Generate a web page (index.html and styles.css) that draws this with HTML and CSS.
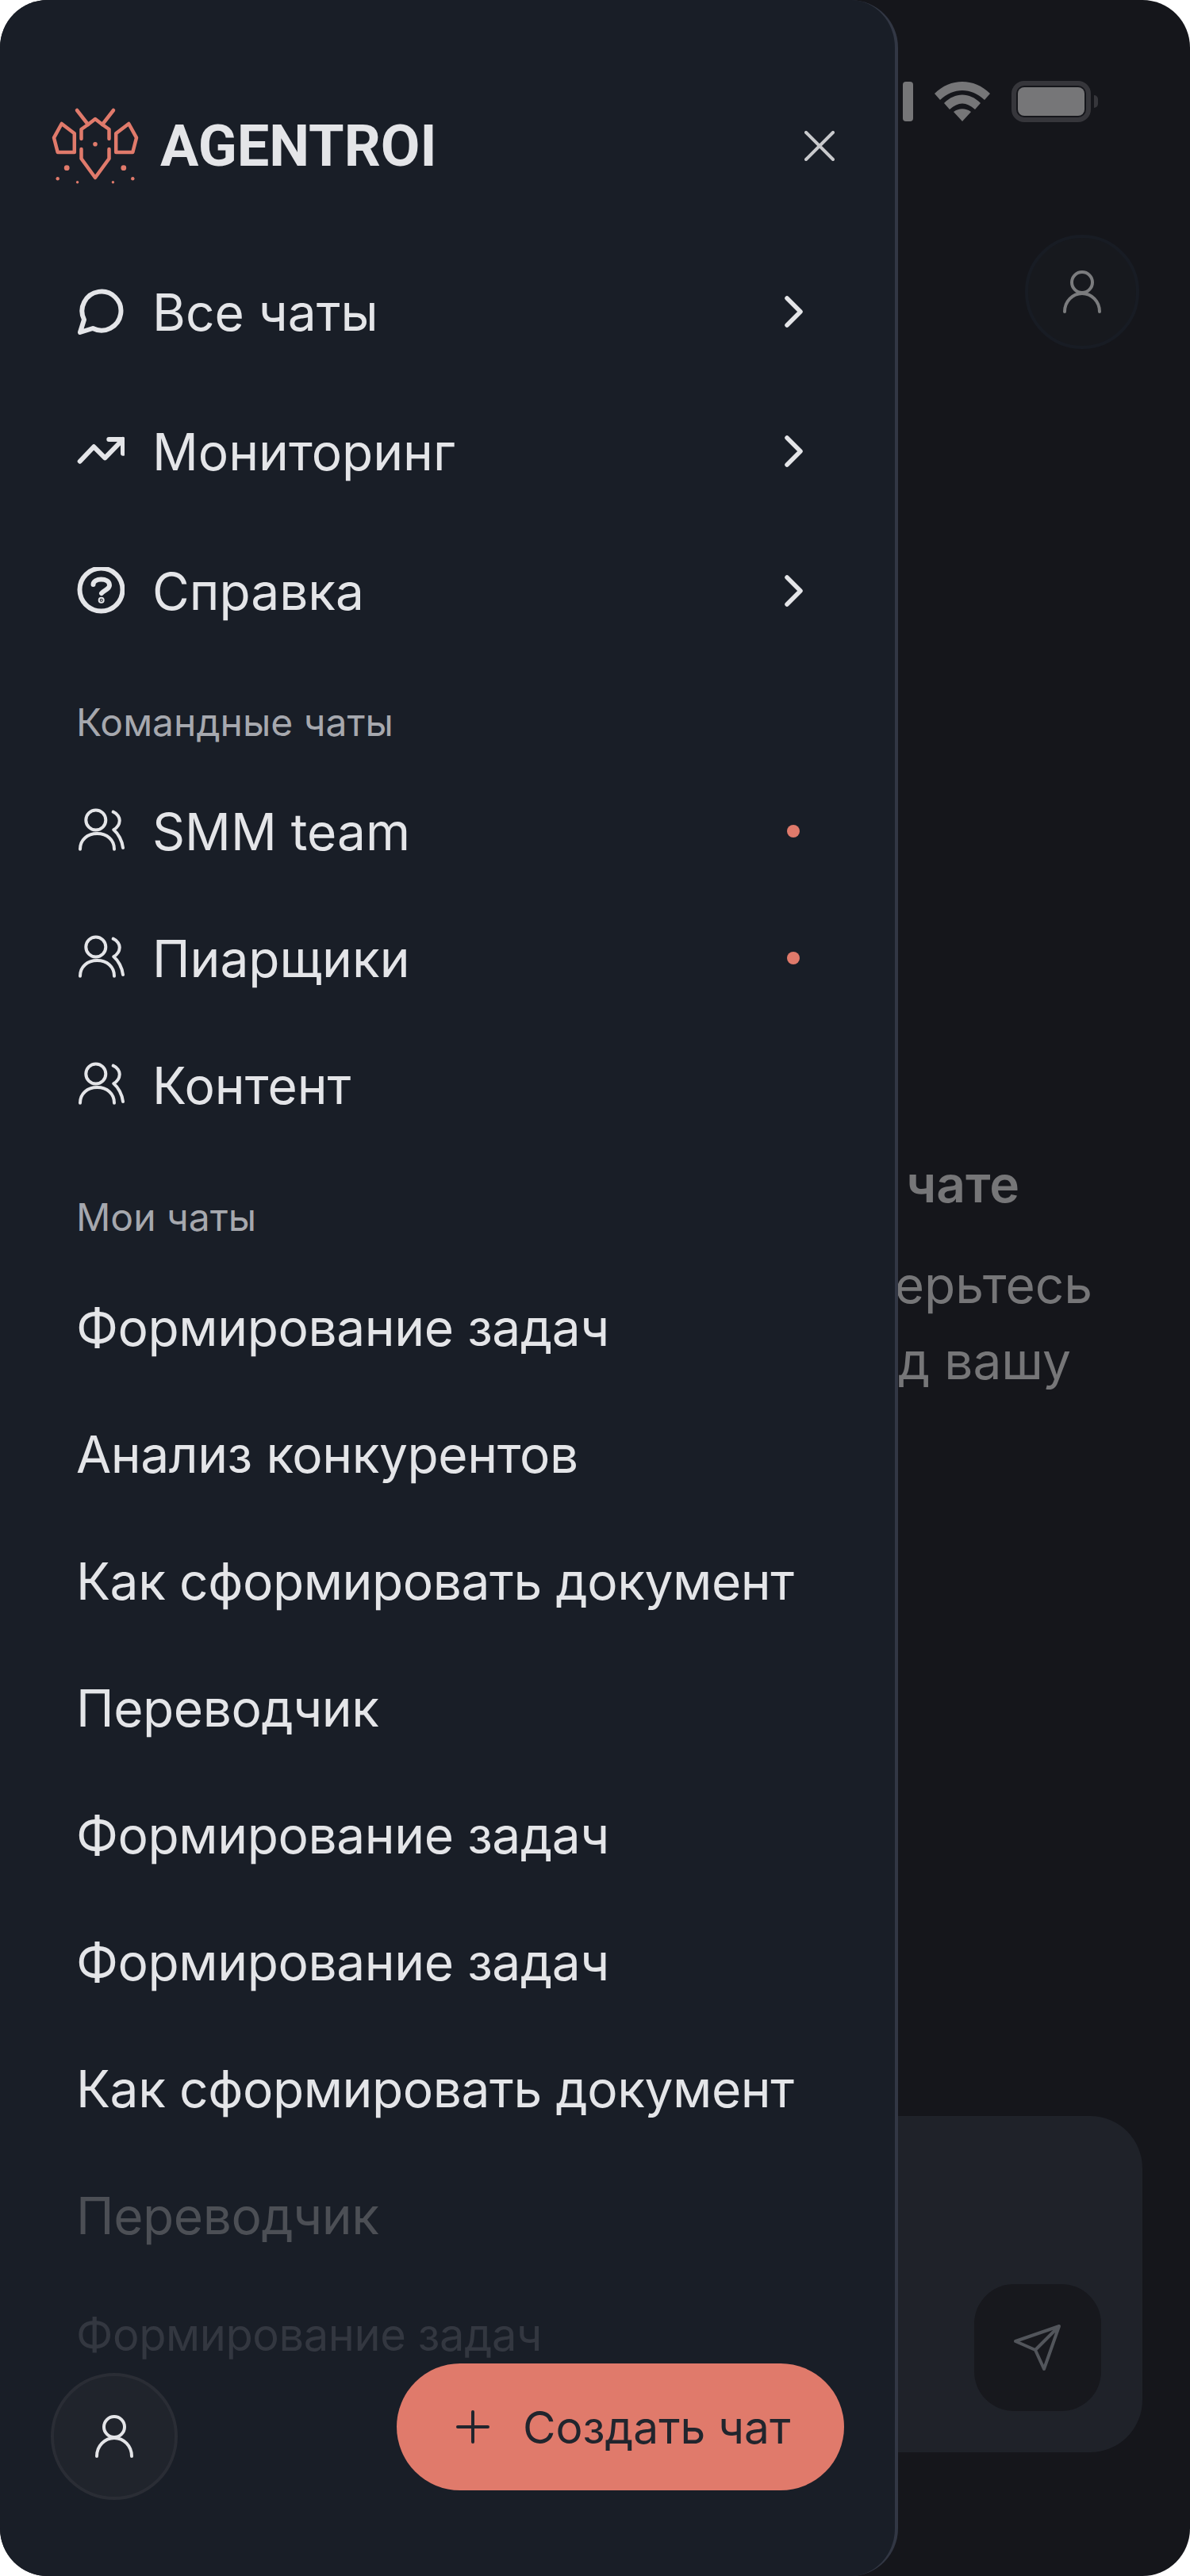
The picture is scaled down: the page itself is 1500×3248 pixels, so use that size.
FILE: index.html
```html
<!DOCTYPE html>
<html lang="ru">
<head>
  <meta charset="UTF-8">
  <title>Agentroi</title>
  <link rel="stylesheet" href="styles.css">
</head>
<body>
<div class="phone">

  <!-- chat screen behind the drawer -->
  <div class="screen">
    <div class="status">
      <span class="signal"></span>
      <svg class="wifi" viewBox="0 0 70 50"><path d="M0 15C20-5 50-5 70 15l-7 8C46 7 24 7 7 23zM12 27C26 13 44 13 58 27l-7 8C40 25 30 25 19 35zM24 38c7-5 15-5 22 0L35 50z" fill="#767678"/></svg>
      <span class="battery"><i></i></span>
      <span class="nub"></span>
    </div>
    <div class="screen-top">
      <span class="round-btn dim">
        <svg viewBox="0 0 48 54" class="user"><circle cx="24" cy="15" r="13"/><path d="M2 52c0-13 10-23 22-23s22 10 22 23"/></svg>
      </span>
    </div>
    <div class="empty">
      <h3>в чате</h3>
      <p class="line-a">доверьтесь</p>
      <p class="line-b">под вашу</p>
    </div>
    <div class="composer">
      <span class="send">
        <svg viewBox="0 0 64 64"><path d="M59 5 4 24 29 35 40 59zM59 5 29 35"/></svg>
      </span>
    </div>
  </div>

  <!-- drawer -->
  <aside class="drawer">
    <header class="brand">
      <svg class="logo" viewBox="0 0 106 95">
        <g class="logo-line">
          <path d="M30 2 44 20 53 13 62 20 76 2"/>
          <path d="M35.500 38V26L44 20M70.500 38V26L62 20"/>
          <path d="M35.500 51V63L53 87 70.500 63V51"/>
          <path d="M10.700 19 1 36.700 5.700 55H26.800V31.300z"/>
          <path d="M95.300 19 105 36.700 100.300 55H79.200V31.300z"/>
        </g>
        <g class="logo-dots">
          <circle cx="53" cy="44.700" r="2.800"/>
          <circle cx="17.200" cy="74.700" r="3.400"/><circle cx="88.800" cy="74.700" r="3.400"/>
          <circle cx="5.700" cy="88.300" r="2.200"/><circle cx="30.600" cy="92.700" r="1.700"/>
          <circle cx="75.400" cy="92.700" r="1.700"/><circle cx="100.300" cy="88.300" r="2.200"/>
        </g>
      </svg>
      <span class="brand-name">AGENTROI</span>
      <svg class="close" viewBox="0 0 38 38"><path d="M2 2l34 34M36 2 2 36"/></svg>
    </header>

    <nav class="main-nav">
      <a class="nav-row">
        <svg class="ico" viewBox="0 0 60 60"><path d="M9 40A24.500 24.500 0 1 1 20 51L4 56z"/></svg>
        <span>Все чаты</span>
        <svg class="chev" viewBox="0 0 24 40"><path d="M3 3l17 17L3 37"/></svg>
      </a>
      <a class="nav-row">
        <svg class="ico" viewBox="0 0 60 60"><path d="M3.700 42.700 21.300 24.300 35.300 38.300 58 15M40.300 15H58V32.700"/></svg>
        <span>Мониторинг</span>
        <svg class="chev" viewBox="0 0 24 40"><path d="M3 3l17 17L3 37"/></svg>
      </a>
      <a class="nav-row">
        <svg class="ico" viewBox="0 0 60 60"><circle cx="30.500" cy="28.500" r="27"/><path d="M20.500 22C20.500 18 25 15.500 30.500 15.500 36 15.500 41 18 41 23 41 28 34 29 31 33"/><circle class="fill" cx="30.700" cy="41.700" r="1"/></svg>
        <span>Справка</span>
        <svg class="chev" viewBox="0 0 24 40"><path d="M3 3l17 17L3 37"/></svg>
      </a>
    </nav>

    <h4 class="section-title first">Командные чаты</h4>
    <a class="team-row">
      <svg class="ico thin" viewBox="0 0 60 60"><circle cx="23.800" cy="16" r="12.500"/><path d="M4 52.700C4 41 13 33 25.500 33S47 41 47 52.700M45.700 5.700C51 8 54 13 53.700 17 53.500 22 50 26 46.300 28.300 52 33 57 42 58 51"/></svg>
      <span>SMM team</span><i class="dot"></i>
    </a>
    <a class="team-row">
      <svg class="ico thin" viewBox="0 0 60 60"><circle cx="23.800" cy="16" r="12.500"/><path d="M4 52.700C4 41 13 33 25.500 33S47 41 47 52.700M45.700 5.700C51 8 54 13 53.700 17 53.500 22 50 26 46.300 28.300 52 33 57 42 58 51"/></svg>
      <span>Пиарщики</span><i class="dot"></i>
    </a>
    <a class="team-row">
      <svg class="ico thin" viewBox="0 0 60 60"><circle cx="23.800" cy="16" r="12.500"/><path d="M4 52.700C4 41 13 33 25.500 33S47 41 47 52.700M45.700 5.700C51 8 54 13 53.700 17 53.500 22 50 26 46.300 28.300 52 33 57 42 58 51"/></svg>
      <span>Контент</span>
    </a>

    <h4 class="section-title second">Мои чаты</h4>
    <div class="chats">
      <a class="chat-row">Формирование задач</a>
      <a class="chat-row">Анализ конкурентов</a>
      <a class="chat-row">Как сформировать документ</a>
      <a class="chat-row">Переводчик</a>
      <a class="chat-row">Формирование задач</a>
      <a class="chat-row">Формирование задач</a>
      <a class="chat-row">Как сформировать документ</a>
      <a class="chat-row fade-1">Переводчик</a>
      <a class="chat-row fade-2">Формирование задач</a>
    </div>

    <div class="drawer-foot">
      <span class="round-btn">
        <svg viewBox="0 0 48 54" class="user"><circle cx="24" cy="15" r="13"/><path d="M2 52c0-13 10-23 22-23s22 10 22 23"/></svg>
      </span>
      <button class="create">
        <svg viewBox="0 0 44 44"><path d="M22 3v38M3 22h38"/></svg>
        Создать чат
      </button>
    </div>
  </aside>
</div>
</body>
</html>
```

FILE: styles.css
```css
* { box-sizing: border-box; }
html, body { margin: 0; padding: 0; background: #fff; }
body { font-family: Inter, "Noto Sans", sans-serif; color: #e4e5e8; }
a { display: block; }

.phone {
  position: relative;
  width: 1500px;
  height: 3248px;
  border-radius: 60px;
  overflow: hidden;
  background: #15161b;
}

/* background chat screen */
.screen {
  height: 100%;
  display: flex;
  flex-direction: column;
}
.status {
  display: flex;
  align-items: center;
  height: 52px;
  margin-top: 102px;
  padding-left: 1138px;
}
.signal { width: 13px; height: 50px; border-radius: 4px; background: #767678; }
.wifi { width: 70px; height: 50px; margin-left: 27px; }
.battery {
  width: 100px;
  height: 52px;
  margin-left: 27px;
  border: 6px solid #36363b;
  border-radius: 16px;
  display: flex;
}
.battery i { flex: 1; margin: 2px; border-radius: 8px; background: #767678; }
.nub { width: 5px; height: 16px; margin-left: 4px; border-radius: 0 8px 8px 0; background: #36363b; }

.screen-top { display: flex; justify-content: flex-end; padding: 142px 64px 0 0; }
.round-btn {
  width: 160px;
  height: 160px;
  flex: none;
  border-radius: 50%;
  border: 4px solid #2a2d35;
  background: #20242c;
  display: flex;
  align-items: center;
  justify-content: center;
}
.round-btn.dim { width: 144px; height: 144px; background: #17191e; border-color: #181c24; }
.user { width: 48px; height: 54px; fill: none; stroke: #e4e5e8; stroke-width: 4; stroke-linecap: round; }
.dim .user { stroke: #7b7c7e; }

.empty {
  margin-top: 1017px;
  text-align: right;
  white-space: nowrap;
  color: #767678;
  font-size: 64px;
}
.empty h3 { margin: 0 215px 0 0; font-size: 64px; font-weight: 600; line-height: 72px; }
.empty p { margin: 0; line-height: 96px; }
.empty .line-a { margin: 43px 123px 0 0; }
.empty .line-b { margin-right: 150px; }

.composer {
  align-self: flex-end;
  width: 400px;
  height: 424px;
  margin: auto 60px 156px 0;
  padding: 0 52px 52px 0;
  border-radius: 66px;
  background: #1f2229;
  display: flex;
  align-items: flex-end;
  justify-content: flex-end;
}
.send {
  width: 160px;
  height: 160px;
  border-radius: 50px;
  background: #17181d;
  display: flex;
  align-items: center;
  justify-content: center;
}
.send svg { width: 64px; height: 64px; fill: none; stroke: #52555b; stroke-width: 4; stroke-linejoin: round; }

/* drawer */
.drawer {
  position: absolute;
  left: 0;
  top: 0;
  bottom: 0;
  width: 1132px;
  padding: 0 0 0 96px;
  background: #191e27;
  border-right: 4px solid #323744;
  border-radius: 0 60px 60px 0;
  overflow: hidden;
}
.brand {
  display: flex;
  align-items: center;
  height: 100px;
  margin: 134px 0 0 -29px;
  position: relative;
}
.logo { width: 106px; height: 95px; flex: none; overflow: visible; }
.logo-line { fill: none; stroke: #e07a6b; stroke-width: 4.500; stroke-linecap: round; stroke-linejoin: round; }
.logo-dots { fill: #e07a6b; }
.brand-name { margin-left: 29px; font-family: Roboto, sans-serif; font-weight: 700; font-size: 72px; color: #e4e5e8; }
.close {
  position: absolute;
  left: 947px;
  top: 31px;
  width: 38px;
  height: 38px;
  fill: none;
  stroke: #c8c9cc;
  stroke-width: 4;
  stroke-linecap: round;
}

.main-nav { margin-top: 71px; }
.nav-row, .team-row { display: flex; align-items: center; font-size: 64px; }
.nav-row { height: 176px; }
.team-row { height: 160px; }
.nav-row span, .team-row span { margin-left: 35px; white-space: nowrap; }
.ico {
  width: 60px;
  height: 60px;
  margin-left: 1px;
  flex: none;
  fill: none;
  stroke: #e4e5e8;
  stroke-width: 6;
  stroke-linecap: round;
  stroke-linejoin: round;
}
.ico.thin { stroke-width: 4; }
.ico .fill { fill: #e4e5e8; }
.chev {
  width: 24px;
  height: 40px;
  margin-left: auto;
  margin-right: 115px;
  fill: none;
  stroke: #e4e5e8;
  stroke-width: 5.500;
  stroke-linecap: round;
  stroke-linejoin: round;
}
.dot { width: 16px; height: 16px; margin-left: auto; margin-right: 120px; border-radius: 50%; background: #e07a6b; }

.section-title { margin: 0; font-size: 48px; font-weight: 400; line-height: 54px; color: #a6a8ae; }
.section-title.first { margin-top: 51px; margin-bottom: 30px; }
.section-title.second { margin-top: 60px; margin-bottom: 32px; }

.chat-row { height: 160px; font-size: 64px; letter-spacing: -0.4px; line-height: 160px; white-space: nowrap; }
.fade-1 { color: #4c4f55; }
.fade-2 { color: #333740; height: 140px; font-size: 56px; line-height: 140px; }

.drawer-foot {
  position: absolute;
  left: 64px;
  top: 2980px;
  width: 1000px;
  display: flex;
  align-items: flex-start;
  justify-content: space-between;
}
.drawer-foot .round-btn { margin-top: 12px; }
.create {
  width: 564px;
  height: 160px;
  padding: 0 0 0 74px;
  border: 0;
  border-radius: 80px;
  background: #e07a6b;
  display: flex;
  align-items: center;
  gap: 41px;
  font-family: Inter, sans-serif;
  font-size: 56.800px;
  color: #21252d;
}
.create svg { width: 44px; height: 44px; fill: none; stroke: #21252d; stroke-width: 4; stroke-linecap: round; }
```
